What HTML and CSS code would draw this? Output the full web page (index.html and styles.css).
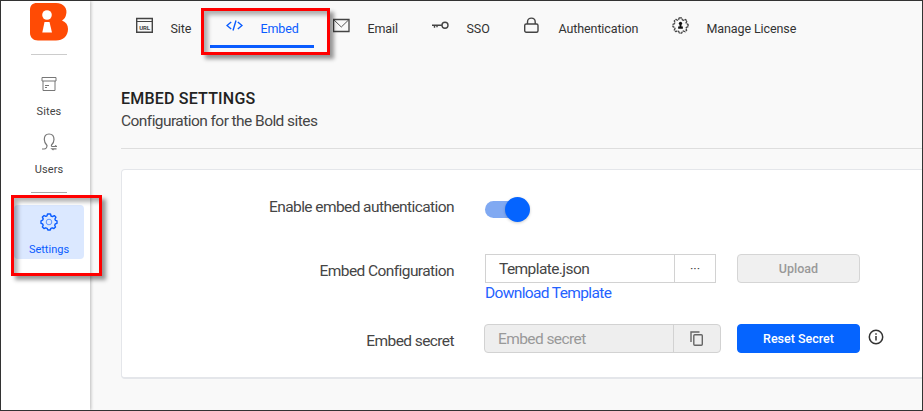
FILE: index.html
```html
<!DOCTYPE html>
<html lang="en">
<head>
<meta charset="utf-8">
<title>Embed Settings</title>
<link rel="stylesheet" href="styles.css">
</head>
<body>
<div class="frame">
  <aside class="sidebar">
    <svg class="logo" width="40" height="38" viewBox="0 0 40 38"><path fill="#ff4b05" d="M7 0H26C34 0 38 6 36 12C35.500 14 34.500 16 32 17.500C36 19 38 22 38 26C38 33 33 37.500 26 37.500H8C3 37.500 0 34 0 30V7C0 2.500 2.500 0 7 0Z"/><circle cx="17" cy="12" r="4.800" fill="#fff"/><path fill="#fff" d="M14.500 19H19.500L22 29.500H12.300Z"/></svg>
    <hr class="rule">
    <a class="nav sites"><svg width="16" height="16" viewBox="0 0 16 16" fill="none" stroke="#777"><path d="M1 1.500H15V5H1ZM2 5V14.500H14V5M4 9.500H8M4 11.500H6"/></svg><span>Sites</span></a>
    <a class="nav users"><svg width="16" height="18" viewBox="0 0 16 18" fill="none" stroke="#777" stroke-width="1.200"><path d="M1 16H3C5 16 6 14.500 6 12.500C4.500 11 3.300 9 3.300 6.500C3.300 3 5 1 8 1S13 3 13 6.500C13 9 12 10.500 10.500 12C10.300 13 10.500 13.500 11 13.500H15.500L14 12.500M15.500 15.800H11L12.500 17"/></svg><span>Users</span></a>
    <hr class="rule second">
    <a class="nav settings"><svg width="18" height="18" viewBox="0 0 18 18" fill="none" stroke="#0a5cff" stroke-width="1.400" stroke-linejoin="round"><path d="M7.500 1H10.500L11 3L12.500 3.600L14.300 2.600L15.900 4.300L14.900 6L15.400 7.300L17 7.800V10.300L15.300 10.900L14.700 12.200L15.500 14L13.900 15.600L12.200 14.800L10.900 15.300L10.300 17H7.800L7.100 15.300L5.700 14.800L4 15.500L2.400 13.900L3.200 12.200L2.600 10.900L1 10.300V7.800L2.700 7.100L3.200 5.900L2.400 4.100L4.100 2.500L5.800 3.400L7 2.900Z"/><circle cx="9" cy="9" r="2.800" stroke-width="1" stroke="#5b92ff"/></svg><span>Settings</span></a>
  </aside>
  <main class="main">
    <nav class="tabs">
      <a class="tab"><svg width="17" height="16" viewBox="0 0 17 16" fill="none" stroke="#444"><path stroke-width="1.400" d="M.7 1.500H16.300V15.200H.7Z"/><path d="M1 4.500H16"/><text x="8.500" y="12.500" text-anchor="middle" class="url">URL</text></svg><span>Site</span></a>
      <a class="tab active"><svg width="17" height="16" viewBox="0 0 17 16" fill="none" stroke="#0a5cff" stroke-width="1.400"><path d="M5.200 5L1 8.500L5.200 12M11.800 5L16 8.500L11.800 12M10 3.500L7 13.500"/></svg><span>Embed</span></a>
      <a class="tab"><svg width="17" height="16" viewBox="0 0 17 16" fill="none" stroke="#444"><path stroke-width="1.300" d="M.6 2.500H16V14.500H.6Z"/><path stroke-width=".9" d="M1 3L8.300 10L15.500 3"/></svg><span>Email</span></a>
      <a class="tab"><svg width="17" height="16" viewBox="0 0 17 16" fill="none" stroke="#444" stroke-width="1.400"><circle cx="13" cy="8.200" r="3"/><path d="M10 8.200H0M2.500 8.200V10.700M5 8.200V10.200"/></svg><span>SSO</span></a>
      <a class="tab"><svg width="17" height="16" viewBox="0 0 17 16" fill="none" stroke="#444" stroke-width="1.400"><rect x=".7" y="7" width="13.300" height="8.300" rx="1.500"/><path d="M3.500 7V5C3.500 -.2 11.200 -.2 11.200 5V7"/></svg><span>Authentication</span></a>
      <a class="tab"><svg width="17" height="17" viewBox="0 0 18 18" fill="none" stroke="#444" stroke-width="1.400" stroke-linejoin="round"><path stroke-dasharray="3 .7" d="M7.500 1H10.500L11 3L12.500 3.600L14.300 2.600L15.900 4.300L14.900 6L15.400 7.300L17 7.800V10.300L15.300 10.900L14.700 12.200L15.500 14L13.900 15.600L12.200 14.800L10.900 15.300L10.300 17H7.800L7.100 15.300L5.700 14.800L4 15.500L2.400 13.900L3.200 12.200L2.600 10.900L1 10.300V7.800L2.700 7.100L3.200 5.900L2.400 4.100L4.100 2.500L5.800 3.400L7 2.900Z"/><circle cx="9" cy="6.700" r="1.700" fill="#111" stroke="none"/><path d="M8 7H10V10H11.500V12.500H6.500V10H8Z" fill="#111" stroke="none"/></svg><span>Manage License</span></a>
    </nav>
    <header class="heading">
      <h1>EMBED SETTINGS</h1>
      <p>Configuration for the Bold sites</p>
    </header>
    <section class="card">
      <div class="row auth"><label>Enable embed authentication</label><div class="toggle"><i></i></div></div>
      <div class="row config"><label>Embed Configuration</label>
        <div class="field file"><span class="value">Template.json</span><span class="addon dots">···</span></div>
        <button class="btn disabled">Upload</button>
      </div>
      <a class="download">Download Template</a>
      <div class="row secret"><label>Embed secret</label>
        <div class="field key"><span class="value">Embed secret</span><span class="addon"><svg width="14" height="16" viewBox="0 0 14 16" fill="none" stroke="#666" stroke-width="1.400"><path d="M1 11V1H9.500"/><rect x="3.800" y="3.800" width="8.500" height="10.500" rx="1"/></svg></span></div>
        <button class="btn primary">Reset Secret</button>
        <svg class="info" width="16" height="16" viewBox="0 0 16 16" fill="none" stroke="#333" stroke-width="1.500"><circle cx="8" cy="8" r="6.700"/><path d="M8 7V11.500M8 4.300V5.800"/></svg>
      </div>
    </section>
  </main>
  <div class="mark mark-tab"></div>
  <div class="mark mark-nav"></div>
</div>
</body>
</html>
```
FILE: styles.css
```css
* { box-sizing: border-box; }
body { margin: 0; font-family: Roboto, "Liberation Sans", sans-serif; color: #454545; }
.frame { position: relative; display: flex; width: 923px; height: 411px; border: 1px solid #333; background: #f9f9f9; overflow: hidden; }
.sidebar { width: 89px; flex: none; background: #fff; box-shadow: 1px 0 3px rgba(0,0,0,.25); display: flex; flex-direction: column; align-items: center; padding-left: 7px; z-index: 1; }
.logo { margin: 2px 0 0 1px; flex: none; }
.rule { width: 36px; height: 1px; border: 0; margin: 13px 0 0; background: #ccc; flex: none; }
.nav { display: flex; flex-direction: column; align-items: center; font-size: 11px; line-height: 14px; letter-spacing: 0; color: #444; flex: none; }
.sites { margin-top: 21px; }
.sites span { margin-top: 13px; }
.sites span, .users span { letter-spacing: .1px; }
.users { margin-top: 14px; }
.users span { margin-top: 12px; }
.rule.second { margin-top: 15px; background: #aaa; }
.settings { width: 70px; height: 54px; margin-top: 12px; padding-top: 8px; background: #dbe8ff; border-radius: 4px; color: #0a5cff; }
.settings span { margin-top: 12px; }
.main { flex: 1; min-width: 0; }
.tabs { display: grid; grid-template-columns: 90px 107px 99px 92px 148px 160px; height: 48px; padding-left: 30px; }
.tab { position: relative; display: flex; padding: 16px 0 0 15.500px; font-size: 12.500px; letter-spacing: -.1px; line-height: 16px; white-space: nowrap; color: #333; }
.tab svg { flex: none; margin-right: 18px; }
.tab span { padding-top: 4px; }
.active { color: #0a5cff; }
.active::after { content: ""; position: absolute; left: 0; top: 44px; width: 104px; height: 3px; background: #0a5cff; }
.url { font: 700 6px Roboto, sans-serif; fill: #444; stroke: none; }
.heading { margin-left: 31px; height: 100px; padding-top: 41px; border-bottom: 1px solid #dedede; }
h1 { margin: 0; font-size: 16px; line-height: 18px; letter-spacing: .2px; font-weight: 500; color: #222; }
p { margin: 3px 0 0; font-size: 15.500px; line-height: 20px; letter-spacing: -.56px; }
.card { margin: 20px -5px 0 31px; height: 210px; background: #fff; border: 1px solid #e4e6ea; border-bottom-width: 2px; border-radius: 4px; padding-top: 25px; }
.row { display: flex; align-items: center; height: 29px; font-size: 15.500px; letter-spacing: -.58px; }
.row label { width: 332px; margin-right: 31px; text-align: right; line-height: 20px; flex: none; white-space: nowrap; }
.auth label { margin-top: -5px; }
.toggle { display: flex; justify-content: flex-end; align-items: center; width: 44px; height: 17px; border-radius: 9px; background: #80a9f2; }
.toggle i { width: 25px; height: 25px; margin-right: -1px; flex: none; border-radius: 50%; background: #0564ff; box-shadow: 0 1px 3px rgba(0,0,0,.2); }
.config { margin-top: 30px; }
.config label { padding-top: 4px; }
.field { display: flex; height: 29px; border: 1px solid #d2d2d2; flex: none; line-height: 28px; }
.value { flex: 1; padding-left: 13px; }
.addon { display: flex; align-items: center; justify-content: center; border-left: 1px solid #d2d2d2; }
.file { width: 231px; margin-right: 21px; }
.file .addon { width: 41px; }
.dots { font-size: 13px; letter-spacing: 0; }
.btn { width: 123px; height: 29px; padding: 0; border: 1px solid #d5d5d5; border-radius: 4px; font: 500 12.500px Roboto, sans-serif; }
.disabled { background: #f0f0f0; color: #999; }
.download { display: block; width: 140px; margin: 0 0 0 363px; font-size: 15.500px; letter-spacing: -.63px; line-height: 21px; white-space: nowrap; color: #2462ff; }
.secret { margin-top: 20px; }
.secret label { margin-right: 30px; padding-top: 4px; }
.key { width: 237px; margin-right: 16px; background: #eee; border-radius: 4px; color: #999; }
.key .addon { width: 47px; }
.primary { background: #0564ff; border-color: #0564ff; color: #fff; }
.info { margin: -4px 0 0 8px; flex: none; }
.mark { position: absolute; z-index: 2; border: 3px solid #f00; box-shadow: 4px 4px 4px rgba(0,0,0,.4), inset 4px 4px 4px rgba(0,0,0,.3); }
.mark-tab { left: 200px; top: 7px; width: 129px; height: 47px; }
.mark-nav { left: 10px; top: 194px; width: 91px; height: 81px; }
```
